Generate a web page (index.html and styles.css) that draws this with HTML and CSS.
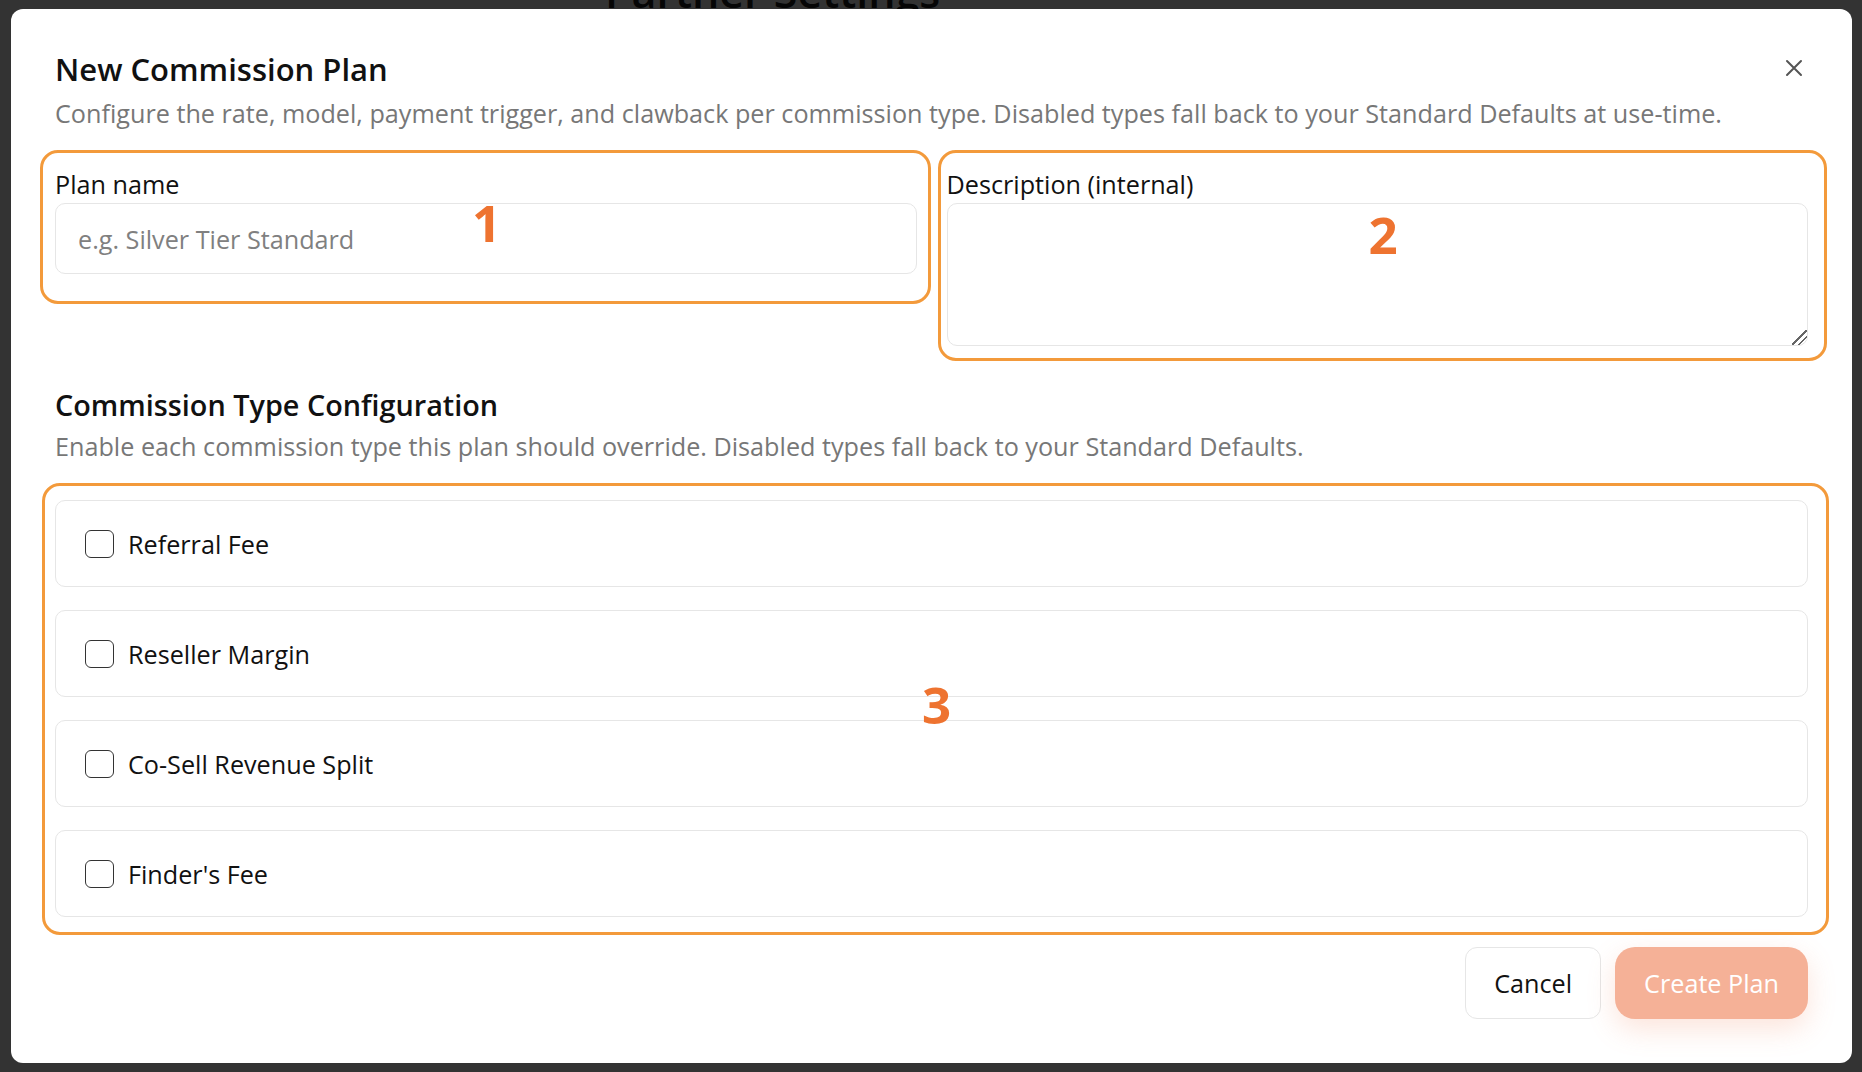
FILE: index.html
```html
<!DOCTYPE html>
<html lang="en">
<head>
  <meta charset="UTF-8" />
  <meta name="viewport" content="width=device-width, initial-scale=1.0" />
  <title>New Commission Plan</title>
  <link rel="stylesheet" href="styles.css">
</head>
<body>
  <div class="page">
    <h1 class="page-title">Partner Settings</h1>
  </div>

  <div class="backdrop">
    <div class="modal" role="dialog" aria-labelledby="modalTitle">
      <button class="close" aria-label="Close">
        <svg viewBox="0 0 18 18" width="18" height="18">
          <path d="M2 2 L16 16 M16 2 L2 16" stroke="#555" stroke-width="2" stroke-linecap="round" fill="none" />
        </svg>
      </button>

      <div class="modal-header">
        <h2 id="modalTitle">New Commission Plan</h2>
        <p>Configure the rate, model, payment trigger, and clawback per commission type. Disabled types fall back to your Standard Defaults at use-time.</p>
      </div>

      <div class="fields">
        <div class="field mark mark-1">
          <label for="planName">Plan name</label>
          <input type="text" id="planName" placeholder="e.g. Silver Tier Standard" />
          <span class="mark-num">1</span>
        </div>
        <div class="field mark mark-2">
          <label for="planDesc">Description (internal)</label>
          <textarea id="planDesc"></textarea>
          <span class="mark-num">2</span>
        </div>
      </div>

      <div class="section">
        <h3>Commission Type Configuration</h3>
        <p>Enable each commission type this plan should override. Disabled types fall back to your Standard Defaults.</p>

        <div class="types mark mark-3">
          <label class="type-row"><input type="checkbox" /><span>Referral Fee</span></label>
          <label class="type-row"><input type="checkbox" /><span>Reseller Margin</span></label>
          <label class="type-row"><input type="checkbox" /><span>Co-Sell Revenue Split</span></label>
          <label class="type-row"><input type="checkbox" /><span>Finder's Fee</span></label>
          <span class="mark-num">3</span>
        </div>
      </div>

      <div class="modal-footer">
        <button class="btn btn-cancel">Cancel</button>
        <button class="btn btn-primary" disabled>Create Plan</button>
      </div>
    </div>
  </div>
</body>
</html>
```

FILE: styles.css
```css
body {
  margin: 0;
  font-family: "Open Sans", "Noto Sans", sans-serif;
  background-color: #ffffff;
  color: #111;
  overflow: hidden;
}

.page {
  height: 1072px;
}

.page-title {
  margin: -34px 0 0 605px;
  font-size: 43px;
  font-weight: 600;
  line-height: 1.2;
  color: #222;
}

.backdrop {
  position: fixed;
  inset: 0;
  background: rgba(0, 0, 0, 0.8);
  padding: 9px 10px 0 11px;
}

.modal {
  position: relative;
  background: #ffffff;
  border-radius: 12px;
  padding: 42px 44px 44px 44px;
  box-sizing: border-box;
}

.close {
  position: absolute;
  top: 49px;
  right: 48px;
  width: 20px;
  height: 20px;
  padding: 1px;
  border: none;
  background: none;
  cursor: pointer;
}

.close svg {
  display: block;
  width: 18px;
  height: 18px;
}

.modal-header h2 {
  margin: 0;
  font-size: 31px;
  font-weight: 600;
  line-height: 36px;
  color: #111;
}

.modal-header p {
  margin: 10px 0 0;
  font-size: 25.2px;
  line-height: 32px;
  color: #777;
}

.fields {
  display: grid;
  grid-template-columns: 1fr 1fr;
  gap: 30px;
  align-items: start;
  margin-top: 39px;
}

.field label {
  display: block;
  font-size: 25.2px;
  line-height: 32px;
  margin-bottom: 3px;
  color: #111;
}

.field input[type="text"],
.field textarea {
  display: block;
  width: 100%;
  box-sizing: border-box;
  border: 1px solid #e6e6e6;
  border-radius: 10px;
  font-family: inherit;
  font-size: 25.2px;
  color: #111;
  padding: 0 22px;
  background: #fff;
  outline: none;
}

.field input[type="text"] {
  height: 71px;
}

.field input::placeholder {
  color: #808080;
}

.field textarea {
  height: 143px;
  padding-top: 14px;
  resize: vertical;
}

.field textarea::-webkit-resizer {
  background:
    linear-gradient(135deg, transparent 46%, #666 46%, #666 54%, transparent 54%, transparent 68%, #666 68%, #666 76%, transparent 76%);
}

.section {
  margin-top: 41px;
}

.section h3 {
  margin: 0;
  font-size: 28.8px;
  font-weight: 600;
  line-height: 36px;
  color: #111;
}

.section p {
  margin: 7px 0 0;
  font-size: 25.2px;
  line-height: 32px;
  color: #777;
}

.types {
  display: flex;
  flex-direction: column;
  gap: 23px;
  margin-top: 38px;
}

.type-row {
  display: flex;
  align-items: center;
  gap: 14px;
  height: 87px;
  padding: 0 29px;
  border: 1px solid #e6e6e6;
  border-radius: 10px;
  box-sizing: border-box;
  font-size: 25.2px;
  color: #111;
  cursor: pointer;
}

.type-row input[type="checkbox"] {
  appearance: none;
  margin: 0;
  width: 29px;
  height: 28px;
  border: 1.5px solid #333;
  border-radius: 6px;
  background: #fff;
  flex-shrink: 0;
}

.modal-footer {
  display: flex;
  justify-content: flex-end;
  gap: 14px;
  margin-top: 30px;
}

.btn {
  height: 72px;
  font-family: inherit;
  font-size: 25.2px;
  cursor: pointer;
  box-sizing: border-box;
}

.btn-cancel {
  padding: 0 28px;
  background: #fff;
  color: #111;
  border: 1px solid #e6e6e6;
  border-radius: 12px;
}

.btn-primary {
  padding: 0 29px;
  background: #f5b197;
  color: #ffffff;
  border: none;
  border-radius: 20px;
  box-shadow: 0 10px 28px rgba(240, 130, 90, 0.22);
}

.btn-primary:disabled {
  cursor: not-allowed;
}

/* annotation outlines */
.mark {
  position: relative;
}

.mark::before {
  content: "";
  position: absolute;
  border: 3px solid #f39a3b;
  border-radius: 18px;
  pointer-events: none;
}

.mark-1::before {
  top: -18px;
  left: -15px;
  right: -14px;
  bottom: -30px;
}

.mark-2::before {
  top: -18px;
  left: -9px;
  right: -19px;
  bottom: -15px;
}

.mark-3::before {
  top: -17px;
  left: -13px;
  right: -21px;
  bottom: -18px;
}

.mark-num {
  position: absolute;
  font-size: 51px;
  font-weight: 700;
  line-height: 51px;
  color: #ee7330;
  pointer-events: none;
}

.mark-1 .mark-num {
  left: 417px;
  top: 29px;
}

.mark-2 .mark-num {
  left: 422px;
  top: 41px;
}

.mark-3 .mark-num {
  left: 867px;
  top: 179px;
}
```
